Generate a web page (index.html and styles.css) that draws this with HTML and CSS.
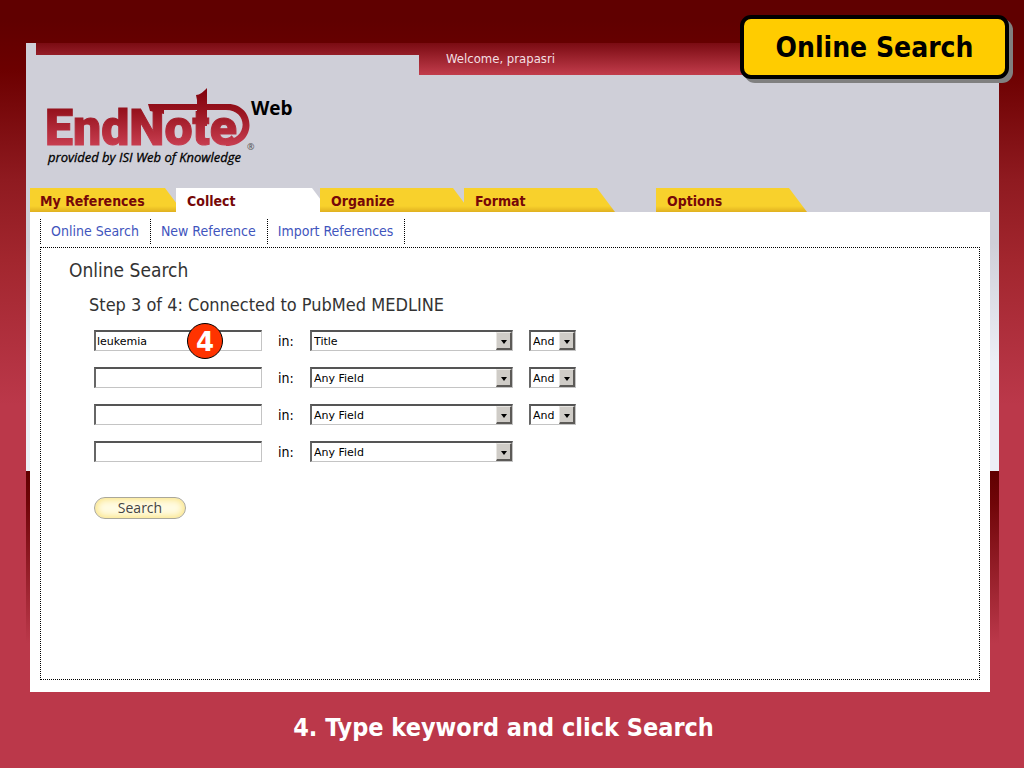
FILE: index.html
```
<!DOCTYPE html>
<html lang="en">
<head>
  <meta charset="UTF-8" />
  <title>EndNote Web - Online Search</title>
  <link rel="stylesheet" href="styles.css">
</head>
<body>
  <h1 class="callout">Online Search</h1>

  <main class="shell">
    <div class="topbar">
      <div class="notch"></div>
      <div class="welcome">Welcome, prapasri</div>
    </div>

    <header class="header">
      <svg class="logo" width="260" height="88" viewBox="0 0 260 88" role="img" aria-label="EndNote Web">
        <defs>
          <linearGradient id="red" gradientUnits="userSpaceOnUse" x1="0" y1="8" x2="0" y2="64">
            <stop offset="0" stop-color="#84040e" />
            <stop offset="0.35" stop-color="#98141f" />
            <stop offset="1" stop-color="#cb4053" />
          </linearGradient>
        </defs>
        <text class="logo-name" x="3" y="61" fill="url(#red)" stroke="url(#red)">EndNote</text>
        <!-- bar over the "ote" that curls round the last letter -->
        <path d="M108 27 L106 20 H186 C214 20 216 62 184 62 L182 56 C207 56 206 26 184 26 H122 V30 Z" fill="url(#red)" />
        <path d="M154 11 C158 11 161 8 165 4 V42 H155 V16 Z" fill="url(#red)" />
        <text class="logo-web" x="209" y="31">Web</text>
        <text class="logo-reg" x="205" y="66">®</text>
        <text class="logo-by" x="6" y="78">provided by ISI Web of Knowledge</text>
      </svg>
    </header>

    <nav class="tabs">
      <a class="tab tab-first" href="#">My References</a>
      <a class="tab active" href="#">Collect</a>
      <a class="tab" href="#">Organize</a>
      <a class="tab" href="#">Format</a>
      <a class="tab tab-options" href="#">Options</a>
    </nav>

    <div class="page">
      <nav class="submenu">
        <a href="#">Online Search</a>
        <a href="#">New Reference</a>
        <a href="#">Import References</a>
      </nav>

      <section class="panel">
        <h2>Online Search</h2>
        <h3>Step 3 of 4: Connected to PubMed MEDLINE</h3>
        <form class="search">
          <div class="row">
            <div class="keyword">
              <input type="text" value="leukemia" aria-label="Keyword 1">
              <span class="badge">4</span>
            </div>
            <label for="field1">in:</label>
            <div class="picker">
              <select id="field1"><option>Title</option><option>Any Field</option></select>
              <span class="arrow"></span>
            </div>
            <div class="picker">
              <select aria-label="Operator 1"><option>And</option><option>Or</option></select>
              <span class="arrow"></span>
            </div>
          </div>
          <div class="row">
            <div class="keyword"><input type="text" aria-label="Keyword 2"></div>
            <label for="field2">in:</label>
            <div class="picker">
              <select id="field2"><option>Any Field</option><option>Title</option></select>
              <span class="arrow"></span>
            </div>
            <div class="picker">
              <select aria-label="Operator 2"><option>And</option><option>Or</option></select>
              <span class="arrow"></span>
            </div>
          </div>
          <div class="row">
            <div class="keyword"><input type="text" aria-label="Keyword 3"></div>
            <label for="field3">in:</label>
            <div class="picker">
              <select id="field3"><option>Any Field</option><option>Title</option></select>
              <span class="arrow"></span>
            </div>
            <div class="picker">
              <select aria-label="Operator 3"><option>And</option><option>Or</option></select>
              <span class="arrow"></span>
            </div>
          </div>
          <div class="row">
            <div class="keyword"><input type="text" aria-label="Keyword 4"></div>
            <label for="field4">in:</label>
            <div class="picker">
              <select id="field4"><option>Any Field</option><option>Title</option></select>
              <span class="arrow"></span>
            </div>
          </div>
          <button class="search-btn" type="button">Search</button>
        </form>
      </section>
    </div>
  </main>

  <p class="caption">4. Type keyword and click Search</p>
</body>
</html>
```
FILE: styles.css
```
* { box-sizing: border-box; }
body {
  margin: 0;
  min-height: 100vh;
  display: flex;
  flex-direction: column;
  font-family: "DejaVu Sans Condensed", "Noto Sans", sans-serif;
  background: linear-gradient(#600000 20px, #6c0000 70px, #8f1a20 180px, #a2262e 260px, #bb384a 405px);
}
h1, h2, h3, p { margin: 0; }
a { text-decoration: none; }

.callout {
  position: absolute;
  top: 15px;
  right: 15px;
  width: 269px;
  height: 64px;
  border: 4px solid #000;
  border-radius: 11px;
  background: #ffcc00;
  box-shadow: 4px 4px 0 #808080;
  font-size: 28px;
  line-height: 58px;
  text-align: center;
}

.shell {
  flex: 1;
  display: flex;
  flex-direction: column;
  margin: 43px 25px 0 26px;
  background: linear-gradient(#cfcfd8 200px, #eceff6 320px, #eceff6 428px, #600000 428px, #700508 460px, #bb384a 600px);
}
.topbar {
  display: flex;
  height: 32px;
  padding-left: 10px;
  background: linear-gradient(90deg, #cfcfd8 10px, transparent 10px), linear-gradient(#7a0b12, #c23d4c);
}
.notch {
  width: 383px;
  margin-top: 12px;
  background: #cfcfd8;
}
.welcome {
  padding-left: 27px;
  color: #f4dfe2;
  font-size: 13px;
  line-height: 32px;
}
.header {
  height: 113px;
  padding: 9px 0 0 16px;
}
.logo { display: block; }
.logo-name {
  font: 900 50px Roboto, sans-serif;
  stroke-width: 1;
}
.logo-web { font: bold 19px "Open Sans", sans-serif; }
.logo-reg { font: 9px "Noto Sans", sans-serif; fill: #555; }
.logo-by { font: italic 13px "Open Sans", sans-serif; stroke: #000; stroke-width: 0.3; }

.tabs {
  display: flex;
  padding-left: 6px;
}
.tab {
  width: 151px;
  height: 24px;
  margin-right: -7px;
  padding-left: 11px;
  background: linear-gradient(#f8d12c 18px, #e0b020);
  clip-path: polygon(0 0, calc(100% - 18px) 0, 100% 100%, 0 100%);
  color: #760808;
  font-size: 14px;
  font-weight: bold;
  line-height: 26px;
}
.tab-first {
  width: 153px;
  margin-left: -2px;
  padding-left: 10px;
}
.tab.active {
  position: relative;
  width: 154px;
  margin-right: -10px;
  background: #fff;
}
.tab-options { margin-left: 48px; }

.page {
  flex: 1;
  display: flex;
  flex-direction: column;
  margin: 0 9px 0 4px;
  padding: 7px 10px 12px;
  background: #fff;
}
.submenu {
  display: flex;
  margin-bottom: 3px;
  font-size: 14px;
  line-height: 25px;
}
.submenu a {
  padding: 0 11px 0 10px;
  border-right: 1px dotted #000;
  color: #3f55bd;
}
.submenu a:first-child { border-left: 1px dotted #000; }

.panel {
  flex: 1;
  padding: 8px 28px;
  border: 1px dotted #000;
  color: #333;
}
.panel h2 {
  font-size: 19px;
  font-weight: normal;
  line-height: 28px;
}
.panel h3 {
  margin: 7px 0 0 20px;
  font-size: 18px;
  font-weight: normal;
  line-height: 28px;
}
.search {
  display: flex;
  flex-direction: column;
  align-items: flex-start;
  gap: 16px;
  margin: 11px 0 0 25px;
}
.row {
  display: grid;
  grid-template-columns: 168px 16px 203px 47px;
  grid-template-rows: 21px;
  column-gap: 16px;
  color: #000;
  font-size: 14px;
  line-height: 23px;
}
.keyword, .picker { position: relative; }
.keyword input, .picker select {
  display: block;
  width: 100%;
  height: 21px;
  border: 1px solid #c4c4c4;
  border-top: 2px solid #555;
  border-left: 2px solid #666;
  border-radius: 0;
  background: #fff;
  color: #000;
  font: 11px "DejaVu Sans", sans-serif;
}
.keyword input { padding: 0 1px; }
.picker select {
  appearance: none;
  padding: 0 2px;
}
.arrow {
  position: absolute;
  top: 2px;
  right: 1px;
  width: 16px;
  height: 18px;
  border: 1px solid #e8e6e2;
  border-right: 2px solid #5c5a57;
  border-bottom: 2px solid #5c5a57;
  background: #cfccc7;
  pointer-events: none;
}
.arrow::after {
  content: "";
  position: absolute;
  top: 7px;
  left: 4px;
  border: 3px solid transparent;
  border-top: 4px solid #000;
  border-bottom: 0;
}
.badge {
  position: absolute;
  top: -7px;
  left: 93px;
  width: 36px;
  height: 36px;
  border: 1px solid #000;
  border-radius: 50%;
  background: #ff3300;
  color: #fff;
  font: bold 26px/36px "DejaVu Sans", sans-serif;
  text-align: center;
}
.search-btn {
  width: 92px;
  height: 22px;
  margin-top: 19px;
  padding: 0;
  border: 1px solid #aaa79a;
  border-radius: 11px;
  background: #fffbe2;
  box-shadow: inset 0 0 6px 2px #fbe58a;
  color: #444;
  font: 14px "Open Sans", sans-serif;
  line-height: 18px;
}

.caption {
  padding: 17px 17px 21px 0;
  color: #fff;
  font-size: 25px;
  font-weight: bold;
  line-height: 38px;
  text-align: center;
}
```
